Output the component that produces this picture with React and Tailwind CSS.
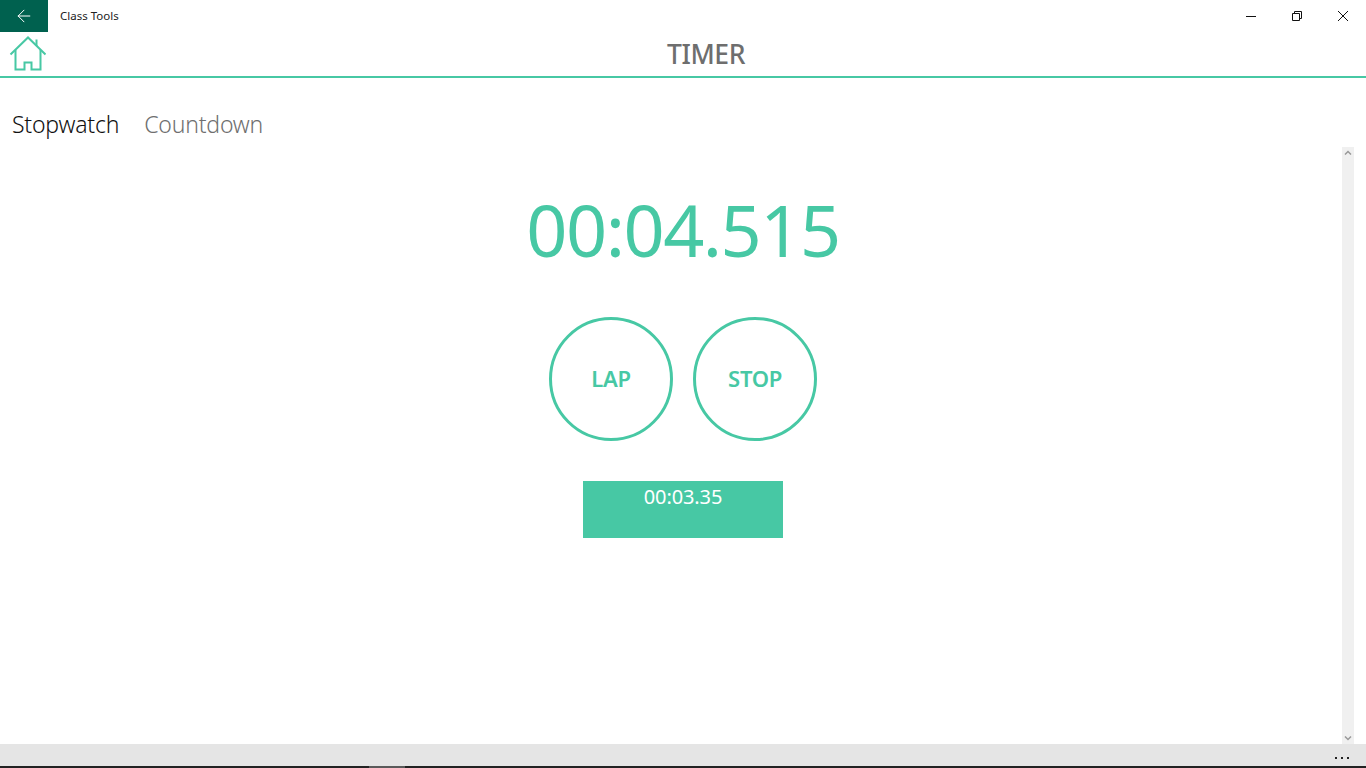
import { ArrowLeft } from 'lucide-react';

const font = "font-['Noto_Sans','Open_Sans',sans-serif]";

const WindowControls = () => {
  return (
    <div className="flex h-8">
      <button className="w-[46px] h-8 flex items-center justify-center">
        <svg width="10" height="10" viewBox="0 0 10 10"><path d="M0 5.5H10" stroke="#111" strokeWidth="1" /></svg>
      </button>
      <button className="w-[46px] h-8 flex items-center justify-center">
        <svg width="10" height="10" viewBox="0 0 10 10" fill="none" stroke="#111" strokeWidth="1">
          <path d="M0.5 2.5H7.5V9.5H0.5Z" />
          <path d="M2.5 2.5V0.5H9.5V7.5H7.5" />
        </svg>
      </button>
      <button className="w-[46px] h-8 flex items-center justify-center">
        <svg width="10" height="10" viewBox="0 0 10 10" fill="none" stroke="#111" strokeWidth="1"><path d="M0 0L10 10M10 0L0 10" /></svg>
      </button>
    </div>
  );
};

const HomeIcon = () => {
  return (
    <svg width="38" height="36" viewBox="0 0 38 36" fill="none" stroke="#47c8a4" strokeWidth="2" className="ml-[9px] mt-1 shrink-0">
      <path d="M1.5 18.5L19 1.5L36.5 18.5" />
      <path d="M6.5 14V33.5H15.5V26.5H22.5V33.5H31.5V14" />
      <path d="M27.5 3.5V10" />
    </svg>
  );
};

const CircleButton = ({ label }) => {
  return (
    <button className="w-[124px] h-[124px] rounded-full border-[3px] border-[#47c8a4] flex items-center justify-center pb-[2px] text-[22px] font-semibold tracking-[-0.3px] text-[#47c8a4]">
      {label}
    </button>
  );
};

const App = () => {
  return (
    <div className={`h-screen flex flex-col bg-white overflow-hidden ${font}`}>
      <div className="h-8 flex items-center shrink-0">
        <div className="w-12 h-8 bg-[#00614f] flex items-center justify-center text-white">
          <ArrowLeft size={20} strokeWidth={1.2} />
        </div>
        <span className="ml-3 text-[11.5px] text-[#222]">Class Tools</span>
        <div className="ml-auto">
          <WindowControls />
        </div>
      </div>

      <header className="h-[46px] border-b-2 border-[#47c8a4] flex shrink-0">
        <div className="w-[46px] shrink-0">
          <HomeIcon />
        </div>
        <h1 className="flex-1 text-center text-[26.5px] leading-[44px] font-medium tracking-[-0.4px] text-[#6e6e6e]">TIMER</h1>
      </header>

      <main className="flex-1 relative min-h-0">
        <div className="flex gap-[25px] pl-3 pt-[27px] text-[23px] leading-[38px] font-light tracking-[-0.2px]">
          <span className="text-[#111]">Stopwatch</span>
          <span className="text-[#6f6f6f]">Countdown</span>
        </div>

        <div className="flex flex-col items-center mt-[37px]">
          <div className="text-[72px] leading-[98px] tracking-[-1.5px] text-[#47c8a4]">00:04.515</div>
          <div className="flex gap-5 mt-[39px]">
            <CircleButton label="LAP" />
            <CircleButton label="STOP" />
          </div>
          <div className="w-[200px] h-[57px] mt-10 bg-[#47c8a4] text-center text-white text-xl tracking-[-0.1px] leading-[32px]">00:03.35</div>
        </div>

        <div className="absolute right-3 top-[69px] bottom-0 w-3 bg-[#f0f0f0] flex flex-col justify-between items-center py-[3px]">
          <svg width="8" height="5" viewBox="0 0 8 5" fill="none" stroke="#999" strokeWidth="1.5"><path d="M1 4.5L4 1.5L7 4.5" /></svg>
          <svg width="8" height="5" viewBox="0 0 8 5" fill="none" stroke="#999" strokeWidth="1.5"><path d="M1 0.5L4 3.5L7 0.5" /></svg>
        </div>
      </main>

      <div className="h-[22px] bg-[#e5e5e5] flex items-center justify-end gap-1 pr-[17px] pt-[5px] shrink-0">
        <span className="w-[2px] h-[2px] bg-[#222]" />
        <span className="w-[2px] h-[2px] bg-[#222]" />
        <span className="w-[2px] h-[2px] bg-[#222]" />
      </div>

      <div className="h-[2px] bg-[#222] flex shrink-0">
        <div className="w-[36px] h-[2px] ml-[369px] bg-[#5a5a5a]" />
      </div>
    </div>
  );
};

export default App;
